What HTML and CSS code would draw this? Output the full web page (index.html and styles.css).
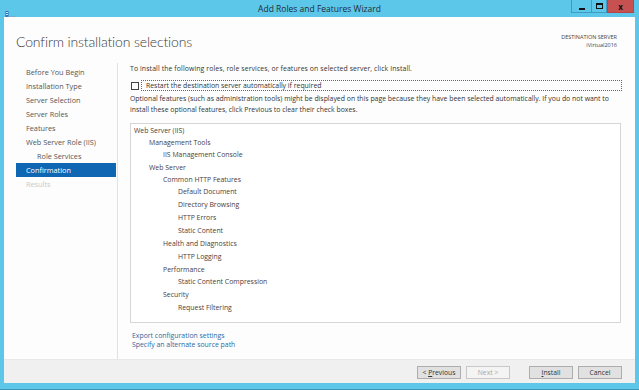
FILE: index.html
```html
<!DOCTYPE html>
<html lang="en">
<head>
  <meta charset="UTF-8" />
  <title>Add Roles and Features Wizard</title>
  <link rel="stylesheet" href="styles.css">
</head>
<body>
  <div class="window">
    <div class="titlebar">
      <div class="app-icon">
        <svg width="11" height="10" viewBox="0 0 11 10">
          <rect x="0.5" y="0" width="3" height="6" fill="#2a6fc0"/>
          <rect x="1" y="1" width="2" height="1" fill="#cfe3f7"/>
          <rect x="1" y="3" width="2" height="1" fill="#cfe3f7"/>
          <rect x="2" y="5.5" width="8.5" height="3.5" fill="#8b9aa5"/>
          <rect x="3" y="6.5" width="6.5" height="1.5" fill="#c9d3da"/>
        </svg>
      </div>
      <div class="title">Add Roles and Features Wizard</div>
      <div class="controls">
        <span class="ctl min"><i></i></span>
        <span class="ctl max"><i></i></span>
        <span class="ctl close">x</span>
      </div>
    </div>

    <div class="client">
      <div class="header">
        <h1>Confirm installation selections</h1>
        <div class="dest">
          DESTINATION SERVER<br>
          iVirtual2016
        </div>
      </div>

      <div class="body">
        <ul class="steps">
          <li>Before You Begin</li>
          <li>Installation Type</li>
          <li>Server Selection</li>
          <li>Server Roles</li>
          <li>Features</li>
          <li>Web Server Role (IIS)</li>
          <li class="sub">Role Services</li>
          <li class="active">Confirmation</li>
          <li class="disabled">Results</li>
        </ul>

        <div class="content">
          <p class="intro">To install the following roles, role services, or features on selected server, click Install.</p>
          <div class="check-row">
            <span class="checkbox"></span>
            <span class="check-label">Restart the destination server automatically if required</span>
          </div>
          <p class="note">Optional features (such as administration tools) might be displayed on this page because they have been selected automatically. If you do not want to install these optional features, click Previous to clear their check boxes.</p>

          <div class="tree">
            <div class="item l0">Web Server (IIS)</div>
            <div class="item l1">Management Tools</div>
            <div class="item l2 leaf">IIS Management Console</div>
            <div class="item l1 group">Web Server</div>
            <div class="item l2">Common HTTP Features</div>
            <div class="item l3 leaf">Default Document</div>
            <div class="item l3 leaf">Directory Browsing</div>
            <div class="item l3 leaf">HTTP Errors</div>
            <div class="item l3 leaf">Static Content</div>
            <div class="item l2 group">Health and Diagnostics</div>
            <div class="item l3 leaf">HTTP Logging</div>
            <div class="item l2 group">Performance</div>
            <div class="item l3 leaf">Static Content Compression</div>
            <div class="item l2 group">Security</div>
            <div class="item l3 leaf">Request Filtering</div>
          </div>

          <div class="links">
            <a href="#">Export configuration settings</a>
            <a href="#">Specify an alternate source path</a>
          </div>
        </div>
      </div>

      <div class="footer">
        <button>&lt; <u>P</u>revious</button>
        <button class="disabled">Next &gt;</button>
        <button class="install"><u>I</u>nstall</button>
        <button>Cancel</button>
      </div>
    </div>
  </div>
</body>
</html>
```

FILE: styles.css
```css
* {
  box-sizing: border-box;
}

body {
  margin: 0;
  width: 639px;
  height: 390px;
  overflow: hidden;
  font-family: 'Open Sans', sans-serif;
  color: #333;
}

.window {
  height: 390px;
  background: #5dc7e9;
  padding: 0 4px 6px 4px;
  border-bottom: 1px solid #3f93b3;
  display: flex;
  flex-direction: column;
}

/* title bar */
.titlebar {
  height: 17px;
  display: grid;
  grid-template-columns: 1fr auto 1fr;
}

.app-icon {
  padding: 4px 0 0 1px;
}

.title {
  font-size: 8.5px;
  line-height: 17px;
  color: #1d2c35;
}

.controls {
  justify-self: end;
  display: flex;
  height: 13px;
  margin-right: 1px;
}

.ctl {
  display: flex;
  align-items: center;
  justify-content: center;
  border: 1px solid #3f9cc0;
  border-top: none;
  height: 13px;
}

.ctl.min {
  width: 20px;
  border-right: none;
}

.ctl.min i {
  width: 6px;
  height: 2px;
  background: #111;
  margin-top: 5px;
}

.ctl.max {
  width: 16px;
}

.ctl.max i {
  width: 7px;
  height: 6px;
  border: 1px solid #111;
  border-top-width: 2px;
}

.ctl.close {
  width: 27px;
  background: #c75050;
  border-color: #b54545;
  color: #111;
  font-size: 8px;
  font-weight: bold;
  line-height: 11px;
}

/* client area */
.client {
  flex: 1;
  background: #fdfdfd;
  display: flex;
  flex-direction: column;
}

.header {
  height: 46px;
  padding: 14px 18px 0 12px;
  display: flex;
  justify-content: space-between;
}

h1 {
  margin: 0;
  font-family: 'Lato', 'Open Sans', sans-serif;
  font-size: 14px;
  font-weight: 300;
  line-height: 21px;
  letter-spacing: -0.15px;
  color: #3b3b3b;
}

.dest {
  text-align: right;
  font-size: 5.5px;
  line-height: 8px;
  color: #444;
  padding-top: 2px;
}

.body {
  flex: 1;
  display: flex;
  padding-left: 12px;
}

.steps {
  list-style: none;
  margin: 0;
  padding: 2px 0 0 0;
  width: 102px;
  border-right: 1px solid #e2e2e2;
}

.steps li {
  height: 14px;
  line-height: 14px;
  padding-left: 10px;
  font-size: 7.3px;
  color: #555;
  margin-right: 1px;
}

.steps li.sub {
  padding-left: 21px;
}

.steps li.active {
  background: #0f66b3;
  color: #fff;
}

.steps li.disabled {
  color: #c9c9c9;
}

.content {
  flex: 1;
  padding: 0 14px 0 12px;
  font-size: 6.9px;
}

.intro {
  margin: 0;
  line-height: 12px;
  letter-spacing: 0.1px;
}

.check-row {
  display: flex;
  align-items: center;
  margin-top: 5px;
  height: 11px;
}

.checkbox {
  width: 8px;
  height: 8px;
  border: 1px solid #444;
  background: #fff;
  margin: 0 2px 0 1px;
}

.check-label {
  flex: 1;
  height: 11px;
  line-height: 9px;
  border: 1px dotted #666;
  padding-left: 4px;
  margin-right: -1px;
}

.note {
  margin: 2px 0 0 0;
  line-height: 11px;
}

.tree {
  margin-top: 8px;
  height: 200px;
  background: #fff;
  border: 1px solid #d6d6d6;
  padding: 1px 0 0 3px;
}

.item {
  line-height: 11.5px;
  color: #4a4040;
}

.item.leaf {
  line-height: 13px;
}

.item.group {
  margin-top: 1px;
}

.l1 { padding-left: 15px; }
.l2 { padding-left: 29px; }
.l3 { padding-left: 44px; }

.links {
  margin-top: 8px;
  padding-left: 2px;
}

.links a {
  display: block;
  line-height: 9px;
  color: #2d6aa0;
  text-decoration: none;
}

/* footer */
.footer {
  height: 24px;
  background: #f0f0f0;
  border-top: 1px solid #e8e8e8;
  display: flex;
  justify-content: flex-end;
  align-items: flex-start;
  padding: 6px 13px 0 0;
  gap: 5px;
}

.footer button {
  width: 44px;
  height: 13px;
  padding: 0;
  border: 1px solid #adadad;
  background: #e1e1e1;
  font-family: 'Open Sans', sans-serif;
  font-size: 6.8px;
  color: #333;
}

.footer button.disabled {
  background: #f4f4f4;
  border-color: #c8c8c8;
  color: #a8a8a8;
}

.footer button.install {
  margin-left: 14px;
}
```
